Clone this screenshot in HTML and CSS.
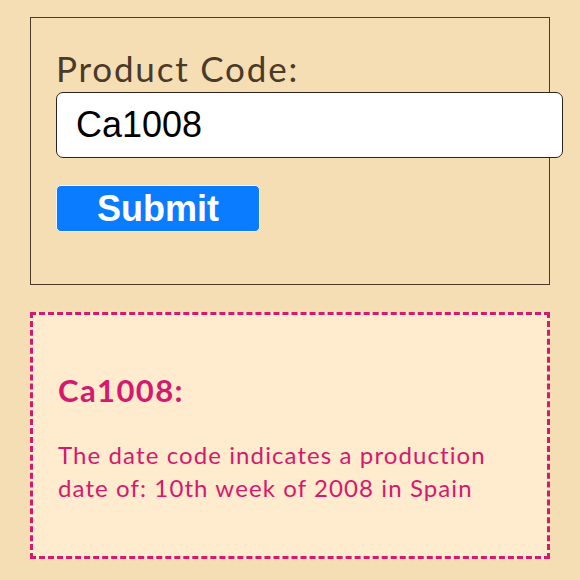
FILE: index.html
```html
<!DOCTYPE html>
<html>
<head>
<meta charset="utf-8">
<link rel="stylesheet" href="styles.css">
</head>
<body>
<form class="lookup">
  <label class="lookup-label" for="code">Product Code:</label>
  <input class="lookup-input" id="code" type="text" value="Ca1008">
  <button class="lookup-submit" type="button">Submit</button>
</form>
<section class="result">
  <h2 class="result-title">Ca1008:</h2>
  <p class="result-text">The date code indicates a production date of: 10th week of 2008 in Spain</p>
</section>
</body>
</html>
```
FILE: styles.css
```css
html, body {
  margin: 0;
  background: #f5deb3;
}
body {
  padding: 17px 30px 0 30px;
  font-family: "Lato", "Noto Sans", sans-serif;
}
.lookup {
  display: flex;
  flex-direction: column;
  align-items: flex-start;
  border: 1px solid #4a3a2a;
  padding: 30px 0 52px 25px;
  margin: 0;
}
.lookup-label {
  font-size: 35px;
  line-height: 40px;
  letter-spacing: 1.8px;
  color: #4a3a2a;
}
.lookup-input {
  box-sizing: border-box;
  width: 507px;
  height: 66px;
  margin: 4px 0 0 0;
  padding: 0 0 0 19px;
  border: 1.5px solid #2a2420;
  border-radius: 7px;
  background: #fff;
  font-family: "Liberation Sans", Arial, sans-serif;
  font-size: 36px;
  color: #000;
  outline: none;
}
.lookup-submit {
  box-sizing: border-box;
  width: 204px;
  height: 47px;
  margin-top: 27px;
  padding: 0;
  border: 1px solid #eef3fa;
  border-radius: 5px;
  background: #0a7cff;
  color: #fff;
  font-family: "Liberation Sans", Arial, sans-serif;
  font-weight: bold;
  font-size: 36px;
  line-height: 45px;
}
.result {
  margin-top: 27px;
  border: 3px dashed #d4196e;
  background: #ffebcd;
  padding: 57px 40px 52px 25px;
  color: #d4196e;
}
.result-title {
  margin: 0;
  font-size: 31px;
  line-height: 36px;
  letter-spacing: 1.4px;
  font-weight: bold;
}
.result-text {
  margin: 30px 0 0 0;
  font-size: 24px;
  line-height: 33px;
  letter-spacing: 1.1px;
}
```
